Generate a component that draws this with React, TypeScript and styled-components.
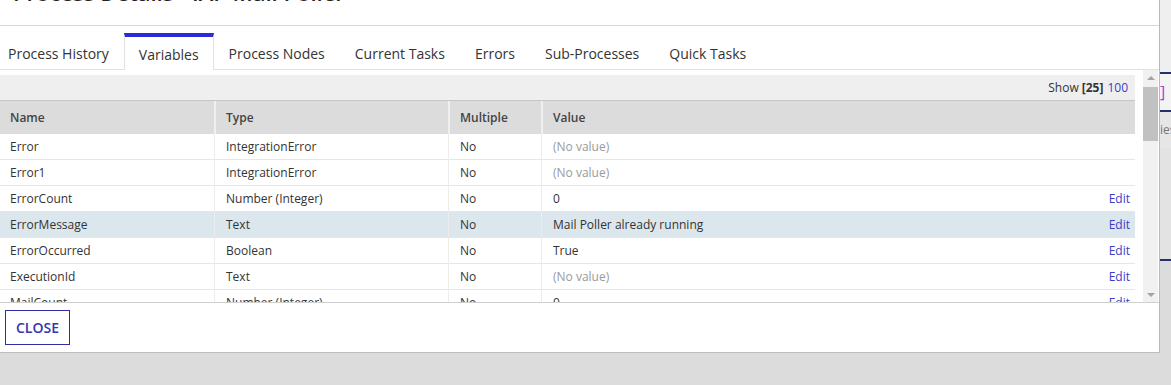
import React from 'react'
import styled, { createGlobalStyle } from 'styled-components'

const GlobalStyle = createGlobalStyle`
  html, body {
    margin: 0;
    padding: 0;
  }
  body {
    background: #dcdcdc;
    font-family: 'Open Sans', 'Noto Sans', sans-serif;
    color: #333;
    overflow: hidden;
  }
  * {
    box-sizing: border-box;
  }
`

const Page = styled.div`
  display: flex;
  align-items: flex-start;
  height: 385px;
  overflow: hidden;
`

const Dialog = styled.div`
  width: 1160px;
  flex-shrink: 0;
  margin-top: -30px;
  background: #fff;
  border-right: 1px solid #b9b9b9;
  border-bottom: 1px solid #bdbdbd;
  display: flex;
  flex-direction: column;
`

const Header = styled.div`
  height: 56px;
  display: flex;
  align-items: flex-end;
  padding: 0 0 22px 13px;
  border-bottom: 1px solid #d8d8d8;
`

const Title = styled.h1`
  margin: 0;
  font-size: 22px;
  line-height: 1;
  font-weight: 600;
  color: #222;
`

const TabBar = styled.div`
  display: flex;
  align-items: flex-start;
  margin: 7px 0 0 -7px;
  height: 37px;
  border-bottom: 1px solid #e2e2e2;
`

const Tab = styled.div<{ active?: boolean }>`
  height: ${({ active }) => (active ? '37px' : '36px')};
  padding: 1px ${({ active }) => (active ? '14px' : '15px')} 0;
  display: flex;
  align-items: center;
  font-size: 14px;
  color: #333;
  border-top: 4px solid ${({ active }) => (active ? '#2b2bd8' : 'transparent')};
  ${({ active }) =>
    active ? 'border-left: 1px solid #e2e2e2; border-right: 1px solid #e2e2e2;' : ''}
  background: #fff;
  white-space: nowrap;
`

const TableArea = styled.div`
  display: flex;
  height: 233px;
  border-bottom: 1px solid #cfcfcf;
`

const Viewport = styled.div`
  width: 1135px;
  padding-top: 5px;
  overflow: hidden;
`

const Toolbar = styled.div`
  height: 26px;
  background: #efefef;
  border-bottom: 1px solid #c6c6c6;
  display: flex;
  align-items: center;
  justify-content: flex-end;
  padding-right: 7px;
  font-size: 12px;
  color: #333;

  & b {
    font-weight: 700;
    margin: 0 4px 0 3px;
  }
`

const LinkText = styled.span`
  color: #3c3cc6;
  cursor: pointer;
`

const Grid = styled.div`
  display: grid;
  grid-template-columns: 214px 234px 93px 1fr;
`

const HeadCell = styled.div<{ first?: boolean }>`
  height: 33px;
  background: #dcdcdc;
  display: flex;
  align-items: center;
  padding-left: 10px;
  border-left: ${({ first }) => (first ? 'none' : '2px solid #f0f0f0')};
  font-size: 12px;
  font-weight: 600;
  color: #444;
`

const Cell = styled.div<{ first?: boolean; highlight?: boolean }>`
  height: 26px;
  display: flex;
  align-items: center;
  justify-content: space-between;
  padding: 0 5px 0 ${({ first }) => (first ? '10px' : '11px')};
  border-left: ${({ first }) => (first ? 'none' : '1px solid #ececec')};
  border-bottom: 1px solid #e6e6e6;
  background: ${({ highlight }) => (highlight ? '#dce7ed' : '#fff')};
  font-size: 12px;
  color: #333;
  white-space: nowrap;
`

const Value = styled.span<{ muted?: boolean }>`
  color: ${({ muted }) => (muted ? '#9a9a9a' : '#333')};
`

const Scrollbar = styled.div`
  width: 15px;
  margin-left: 8px;
  background: #f1f1f1;
  display: flex;
  flex-direction: column;
`

const ScrollButton = styled.div<{ down?: boolean }>`
  height: 15px;
  display: flex;
  align-items: center;
  justify-content: center;
  flex-shrink: 0;

  &::after {
    content: '';
    border-left: 4px solid transparent;
    border-right: 4px solid transparent;
    ${({ down }) =>
      down ? 'border-top: 4px solid #a3a3a3;' : 'border-bottom: 4px solid #a3a3a3;'}
  }
`

const Track = styled.div`
  flex: 1;
  padding-top: 2px;
`

const Thumb = styled.div`
  height: 54px;
  background: #c1c1c1;
`

const Footer = styled.div`
  height: 49px;
  padding: 7px 5px;
`

const CloseButton = styled.button`
  width: 65px;
  height: 35px;
  border: 1px solid #2f2fa2;
  background: #fff;
  color: #3434b2;
  font-family: 'Open Sans', sans-serif;
  font-size: 14px;
  font-weight: 600;
  padding: 0;
  cursor: pointer;
`

const Backdrop = styled.div`
  flex: 1;
  height: 385px;
  display: flex;
  flex-direction: column;
  background: #dcdcdc;
`

const Band = styled.div<{ h: number; bg: string }>`
  height: ${({ h }) => h}px;
  background: ${({ bg }) => bg};
  flex-shrink: 0;
  font-size: 12px;
  color: #777;
  overflow: hidden;
  white-space: nowrap;
  line-height: ${({ h }) => h}px;
`

const Bracket = styled.span`
  color: #b040d0;
  font-size: 16px;
`

interface Variable {
  name: string
  type: string
  multiple: string
  value: string
  editable: boolean
  empty?: boolean
}

const variables: Variable[] = [
  { name: 'Error', type: 'IntegrationError', multiple: 'No', value: '(No value)', editable: false, empty: true },
  { name: 'Error1', type: 'IntegrationError', multiple: 'No', value: '(No value)', editable: false, empty: true },
  { name: 'ErrorCount', type: 'Number (Integer)', multiple: 'No', value: '0', editable: true },
  { name: 'ErrorMessage', type: 'Text', multiple: 'No', value: 'Mail Poller already running', editable: true },
  { name: 'ErrorOccurred', type: 'Boolean', multiple: 'No', value: 'True', editable: true },
  { name: 'ExecutionId', type: 'Text', multiple: 'No', value: '(No value)', editable: true, empty: true },
  { name: 'MailCount', type: 'Number (Integer)', multiple: 'No', value: '0', editable: true },
]

const tabs = [
  'Process History',
  'Variables',
  'Process Nodes',
  'Current Tasks',
  'Errors',
  'Sub-Processes',
  'Quick Tasks',
]

const App = () => {
  return (
    <>
      <GlobalStyle />
      <Page>
        <Dialog>
          <Header>
            <Title>Process Details - IAP Mail Poller</Title>
          </Header>
          <TabBar>
            {tabs.map((t) => (
              <Tab key={t} active={t === 'Variables'}>
                {t}
              </Tab>
            ))}
          </TabBar>
          <TableArea>
            <Viewport>
              <Toolbar>
                Show <b>[25]</b> <LinkText>100</LinkText>
              </Toolbar>
              <Grid>
                <HeadCell first>Name</HeadCell>
                <HeadCell>Type</HeadCell>
                <HeadCell>Multiple</HeadCell>
                <HeadCell>Value</HeadCell>
                {variables.map((v) => {
                  const hl = v.name === 'ErrorMessage'
                  return (
                    <React.Fragment key={v.name}>
                      <Cell first highlight={hl}>
                        {v.name}
                      </Cell>
                      <Cell highlight={hl}>{v.type}</Cell>
                      <Cell highlight={hl}>{v.multiple}</Cell>
                      <Cell highlight={hl}>
                        <Value muted={v.empty}>{v.value}</Value>
                        {v.editable ? <LinkText>Edit</LinkText> : <></>}
                      </Cell>
                    </React.Fragment>
                  )
                })}
              </Grid>
            </Viewport>
            <Scrollbar>
              <ScrollButton />
              <Track>
                <Thumb />
              </Track>
              <ScrollButton down />
            </Scrollbar>
          </TableArea>
          <Footer>
            <CloseButton>CLOSE</CloseButton>
          </Footer>
        </Dialog>
        <Backdrop>
          <Band h={72} bg="#efefef" />
          <Band h={2} bg="#26306a" />
          <Band h={36} bg="#f3f3f3">
            <Bracket>]</Bracket>
          </Band>
          <Band h={2} bg="#26306a" />
          <Band h={36} bg="#e6e6e6">
            ies
          </Band>
          <Band h={111} bg="#e3e3e3" />
          <Band h={2} bg="#26306a" />
          <Band h={124} bg="#dcdcdc" />
        </Backdrop>
      </Page>
    </>
  )
}

export default App
